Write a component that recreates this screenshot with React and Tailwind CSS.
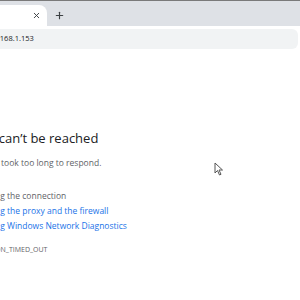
import React from 'react';
import { X, Plus } from 'lucide-react';

export default function App() {
  return (
    <div className="w-[300px] h-[300px] overflow-hidden bg-white relative" style={{ fontFamily: '"Open Sans", "Noto Sans", sans-serif' }}>
      {/* Window frame top */}
      <div className="h-px bg-[#7a7a7a]" />

      {/* Tab strip */}
      <div className="h-[25px] bg-[#dee1e6] flex items-end">
        <div className="w-[47px] h-[21px] bg-white rounded-tr-lg flex items-center justify-end pr-[6px]">
          <X className="w-[9px] h-[9px] text-[#3c4043]" strokeWidth={2.5} />
        </div>
        <div className="ml-[7px] h-[21px] flex items-center">
          <Plus className="w-[11px] h-[11px] text-[#3c4043]" strokeWidth={2.5} />
        </div>
      </div>

      {/* Toolbar */}
      <div className="h-[25px] bg-white flex items-center">
        <div className="h-[20px] w-[298px] bg-[#f1f3f4] rounded-r-md flex items-center overflow-hidden">
          <span className="text-[7.5px] text-[#202124] -ml-[15px] whitespace-nowrap">192.168.1.153</span>
        </div>
      </div>

      {/* Page content */}
      <div className="pt-[77px] whitespace-nowrap">
        <h1 className="-ml-[54px] text-[13px] leading-[20px] text-[#202124] font-normal">This site can’t be reached</h1>
        <p className="-ml-[57px] mt-[9px] text-[8.5px] leading-[12px] text-[#5f6368]">
          <span className="font-bold text-[#202124]">192.168.1.153</span> took too long to respond.
        </p>
        <ul className="mt-[19px] text-[8.5px] leading-[15px]">
          <li className="-ml-[31px] text-[#5f6368]">Checking the connection</li>
          <li className="-ml-[31px] text-[#1a73e8]">Checking the proxy and the firewall</li>
          <li className="-ml-[28px] text-[#1a73e8]">Running Windows Network Diagnostics</li>
        </ul>
        <p className="-ml-[55px] mt-[12px] text-[7px] leading-[10px] text-[#5f6368] uppercase">ERR_CONNECTION_TIMED_OUT</p>
      </div>

      {/* Mouse cursor */}
      <svg className="absolute left-[214px] top-[162px]" width="10" height="14" viewBox="0 0 10 14">
        <path d="M1 1 L1 11 L3.5 8.5 L5.5 13 L7 12.3 L5 8 L8.5 8 Z" fill="white" stroke="#555" strokeWidth="1" strokeLinejoin="round" />
      </svg>
    </div>
  );
}
